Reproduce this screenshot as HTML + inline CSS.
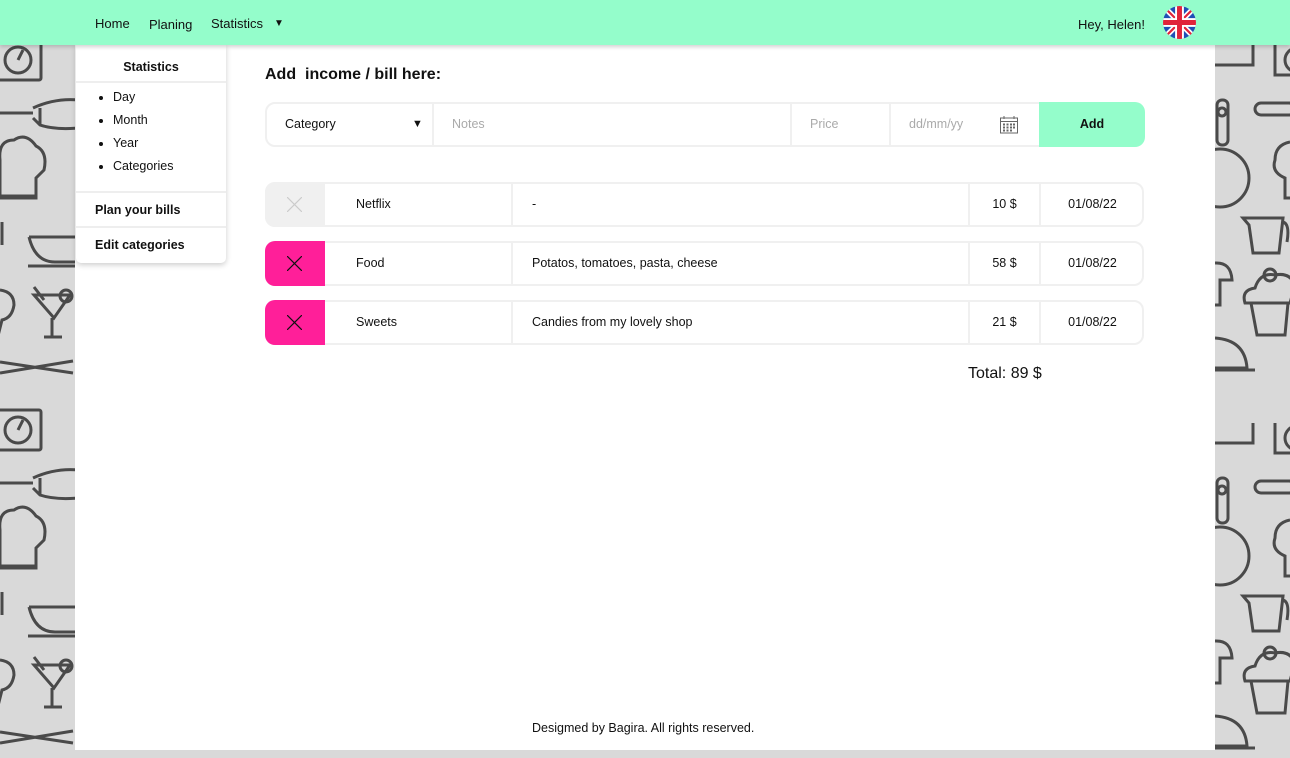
<!DOCTYPE html>
<html><head><meta charset="utf-8"><style>
*{margin:0;padding:0;box-sizing:border-box}
body{width:1290px;height:758px;overflow:hidden;background:#d9d9d9;font-family:"Liberation Sans",Arial,sans-serif;color:#111;position:relative}
.bg{position:absolute;top:0;width:75px;height:758px}
.main{position:absolute;left:75px;top:0;width:1140px;height:750px;background:#fff}
.hdr{position:absolute;left:0;top:0;width:1290px;height:45px;background:#94fdcb;box-shadow:0 2px 4px rgba(0,0,0,.18);z-index:5;font-size:13px}
.hdr span{position:absolute;top:16px}
.menu{position:absolute;left:76px;top:45px;width:150px;height:218px;background:#fff;box-shadow:0 2px 6px rgba(0,0,0,.2);border-radius:0 0 5px 5px;z-index:4;font-size:12.5px}
.menu .t{font-weight:bold;text-align:center;padding-top:15px;height:38px;border-bottom:2px solid #eee}
.menu ul{margin-top:3px;line-height:23px;list-style:disc;height:107px;border-bottom:2px solid #eee;padding-left:37px}
.menu .b{font-weight:bold;padding-left:19px;height:35px;line-height:35px}
.menu .b1{border-bottom:2px solid #eee}
h2{position:absolute;left:265px;top:66px;font-size:16px;font-weight:bold}
.form{position:absolute;left:265px;top:102px;width:878px;height:45px;border:2px solid #f0f0f0;border-radius:10px;font-size:12.5px}
.form div{position:absolute;top:0;height:41px;line-height:41px;border-right:2px solid #f0f0f0}
.ph{color:#aaa}
.add{background:#94fdcb;font-weight:bold;text-align:center;border:none!important;border-radius:0 10px 10px 0}
.row{position:absolute;left:265px;width:879px;height:45px;border:2px solid #f0f0f0;border-radius:10px;font-size:12.5px}
.row div{position:absolute;top:0;height:41px;line-height:41px;border-right:2px solid #f0f0f0}
.x{left:-2px;width:60px;top:-2px!important;height:45px!important;border:none!important;border-radius:10px 0 0 10px}
.total{position:absolute;left:968px;top:365px;font-size:16px}
.foot{position:absolute;left:532px;top:721px;font-size:12.5px}
</style></head><body>
<svg class="bg" style="left:0" viewBox="0 0 75 758" fill="none" stroke="#4a4a4a" stroke-width="3">
<g id="L">
<rect x="-5" y="40" width="46" height="40" rx="2"/><circle cx="18" cy="60" r="13"/><line x1="18" y1="60" x2="23" y2="50"/>
<line x1="0" y1="113" x2="33" y2="113"/><path d="M33 108 Q55 98 78 100 M33 118 L40 125 Q55 130 78 128 M40 108 V125"/>
<path d="M0 198 V160 Q-2 140 14 140 Q26 132 36 146 Q48 152 44 170 L36 178 V198 Z"/><line x1="0" y1="196" x2="36" y2="196"/>
<path d="M29 237 H75 M29 237 Q35 262 55 262 H75 M28 266 H75"/><path d="M2 222 V245"/>
<path d="M0 290 Q14 292 14 305 Q12 318 2 320 L-2 336"/>
<path d="M34 295 H70 L54 318 Z M52 318 V336 M44 337 H62 M34 287 L44 300"/><circle cx="66" cy="296" r="6"/>
<path d="M0 362 L73 373 M0 373 L73 361"/>
</g>
<use href="#L" y="370"/>
</svg>
<svg class="bg" style="left:1215px" viewBox="0 0 75 758" fill="none" stroke="#4a4a4a" stroke-width="3">
<g id="R">
<path d="M0 65 H38 V45 M60 45 V75 H75"/><circle cx="82" cy="60" r="12"/>
<rect x="2" y="100" width="11" height="45" rx="5"/><circle cx="7" cy="112" r="4"/><circle cx="5" cy="178" r="29"/>
<rect x="40" y="103" width="40" height="12" rx="6"/>
<path d="M75 142 Q60 145 60 160 Q56 172 70 178 V198 H80"/>
<path d="M28 218 H68 L64 253 H38 L34 225 Z M68 222 Q75 224 72 242"/>
<path d="M0 263 Q16 262 17 280 H5 V305 H0"/>
<path d="M30 303 Q26 290 40 288 Q45 272 60 275 Q75 272 80 285 L75 303 Z M36 303 L42 335 H70 L73 303"/><circle cx="55" cy="275" r="6"/>
<path d="M0 338 Q30 340 32 368 H0 M-2 370 H40"/>
</g>
<use href="#R" y="378"/>
</svg>
<div class="main"></div>
<div class="hdr">
<span style="left:95px">Home</span><span style="left:149px;top:17px">Planing</span><span style="left:211px">Statistics</span><span style="left:274px;font-size:10px;top:18px">▼</span>
<span style="left:1078px;top:17px">Hey, Helen!</span>
<svg style="position:absolute;left:1163px;top:6px" width="33" height="33" viewBox="0 0 60 60"><defs><clipPath id="c"><circle cx="30" cy="30" r="30"/></clipPath></defs><g clip-path="url(#c)"><rect width="60" height="60" fill="#1f4fb5"/><path d="M0 0 L60 60 M60 0 L0 60" stroke="#fff" stroke-width="10"/><path d="M0 0 L60 60 M60 0 L0 60" stroke="#e0243a" stroke-width="4"/><path d="M30 0 V60 M0 30 H60" stroke="#fff" stroke-width="16"/><path d="M30 0 V60 M0 30 H60" stroke="#e0243a" stroke-width="9"/></g></svg>
</div>
<div class="menu">
<div class="t">Statistics</div>
<ul><li>Day</li><li>Month</li><li>Year</li><li>Categories</li></ul>
<div class="b b1">Plan your bills</div>
<div class="b">Edit categories</div>
</div>
<h2>Add&nbsp; income / bill here:</h2>
<div class="form">
<div style="left:0;width:167px;padding-left:18px">Category<span style="position:absolute;left:145px;font-size:11px">▼</span></div>
<div class="ph" style="left:167px;width:358px;padding-left:18px">Notes</div>
<div class="ph" style="left:525px;width:99px;padding-left:18px">Price</div>
<div class="ph" style="left:624px;width:150px;padding-left:18px;border:none">dd/mm/yy
<svg style="position:absolute;left:108px;top:11px" width="20" height="20" viewBox="0 0 20 20" fill="none" stroke="#666" stroke-width="1"><rect x="1.5" y="3" width="17" height="15"/><line x1="1.5" y1="6.5" x2="18.5" y2="6.5"/><path d="M5 1v3M15 1v3"/><g fill="#666" stroke="none"><rect x="4" y="8.5" width="2" height="2"/><rect x="7.5" y="8.5" width="2" height="2"/><rect x="11" y="8.5" width="2" height="2"/><rect x="14" y="8.5" width="2" height="2"/><rect x="4" y="11.5" width="2" height="2"/><rect x="7.5" y="11.5" width="2" height="2"/><rect x="11" y="11.5" width="2" height="2"/><rect x="14" y="11.5" width="2" height="2"/><rect x="4" y="14.5" width="2" height="2"/><rect x="7.5" y="14.5" width="2" height="2"/><rect x="11" y="14.5" width="2" height="2"/></g></svg></div>
<div class="add" style="left:772px;width:106px;top:-2px;height:45px;line-height:45px">Add</div>
</div>

<div class="row" style="top:182px">
<div class="x" style="background:#f0f0f0"><svg style="position:absolute;left:22px;top:15px" width="15" height="15"><path d="M0 0L15 15M15 0L0 15" stroke="#ccc" stroke-width="1.2"/></svg></div>
<div style="left:58px;width:188px;padding-left:31px">Netflix</div>
<div style="left:246px;width:457px;padding-left:19px">-</div>
<div style="left:703px;width:71px;text-align:center">10 $</div>
<div style="left:774px;width:103px;text-align:center;border:none">01/08/22</div>
</div>
<div class="row" style="top:241px">
<div class="x" style="background:#ff1f99"><svg style="position:absolute;left:22px;top:15px" width="15" height="15"><path d="M0 0L15 15M15 0L0 15" stroke="#111" stroke-width="1.2"/></svg></div>
<div style="left:58px;width:188px;padding-left:31px">Food</div>
<div style="left:246px;width:457px;padding-left:19px">Potatos, tomatoes, pasta, cheese</div>
<div style="left:703px;width:71px;text-align:center">58 $</div>
<div style="left:774px;width:103px;text-align:center;border:none">01/08/22</div>
</div>
<div class="row" style="top:300px">
<div class="x" style="background:#ff1f99"><svg style="position:absolute;left:22px;top:15px" width="15" height="15"><path d="M0 0L15 15M15 0L0 15" stroke="#111" stroke-width="1.2"/></svg></div>
<div style="left:58px;width:188px;padding-left:31px">Sweets</div>
<div style="left:246px;width:457px;padding-left:19px">Candies from my lovely shop</div>
<div style="left:703px;width:71px;text-align:center">21 $</div>
<div style="left:774px;width:103px;text-align:center;border:none">01/08/22</div>
</div>
<div class="total">Total: 89 $</div>
<div class="foot">Desigmed by Bagira. All rights reserved.</div>
</body></html>
